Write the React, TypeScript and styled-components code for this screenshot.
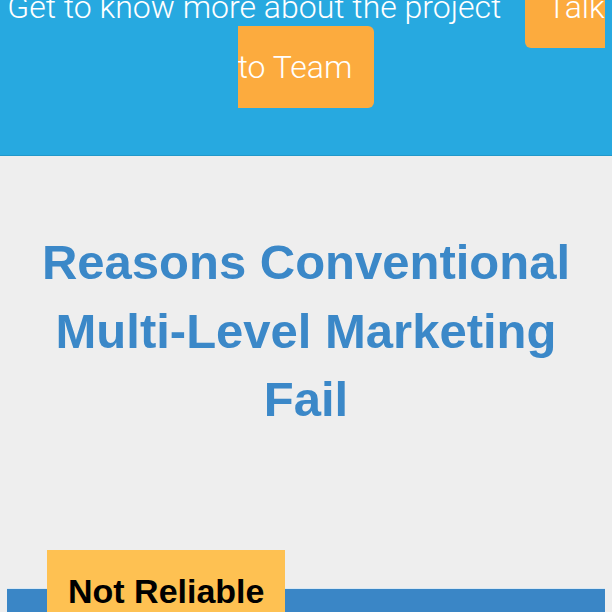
import styled, { createGlobalStyle } from "styled-components";

const GlobalStyle = createGlobalStyle`
  body {
    margin: 0;
    background: #eeeeee;
    font-family: "Liberation Sans", Arial, sans-serif;
    overflow: hidden;
  }
`;

const Page = styled.div`
  margin-top: -79px;
`;

const Hero = styled.section`
  background: #27a9e0;
  padding: 56px 0 58px;
  border-bottom: 1px solid #2198ca;
  text-align: center;
`;

const HeroText = styled.p`
  margin: 0;
  color: #ffffff;
  font-family: Roboto, "Liberation Sans", sans-serif;
  font-weight: 300;
  font-size: 32px;
  line-height: 60px;
`;

const TalkButton = styled.a`
  margin-left: 24px;
  padding: 22px;
  background: #fcab3e;
  color: #ffffff;
  border-radius: 6px;
  text-decoration: none;
`;

const Reasons = styled.section`
  padding: 72px 30px 0;
  text-align: center;
`;

const Heading = styled.h2`
  margin: 0;
  color: #3b88c8;
  font-size: 49px;
  font-weight: bold;
  line-height: 68.5px;
`;

const Tabs = styled.div`
  margin: 154px 7px 0;
`;

const TabPanel = styled.div`
  margin-top: 41px;
  height: 60px;
  background: #3a86c6;
  border-top: 1px solid #d8e8f4;
`;

const Tab = styled.div`
  display: inline-block;
  margin: -42px 0 0 40px;
  padding: 21px 21px;
  background: #fec152;
  color: #000000;
  font-size: 34px;
  font-weight: bold;
  line-height: 40px;
`;

function App() {
  return (
    <Page>
      <GlobalStyle />
      <Hero>
        <HeroText>
          Get to know more about the project
          <TalkButton href="#">Talk to Team</TalkButton>
        </HeroText>
      </Hero>
      <Reasons>
        <Heading>Reasons Conventional Multi-Level Marketing Fail</Heading>
      </Reasons>
      <Tabs>
        <TabPanel>
          <Tab>Not Reliable</Tab>
        </TabPanel>
      </Tabs>
    </Page>
  );
}

export default App;
